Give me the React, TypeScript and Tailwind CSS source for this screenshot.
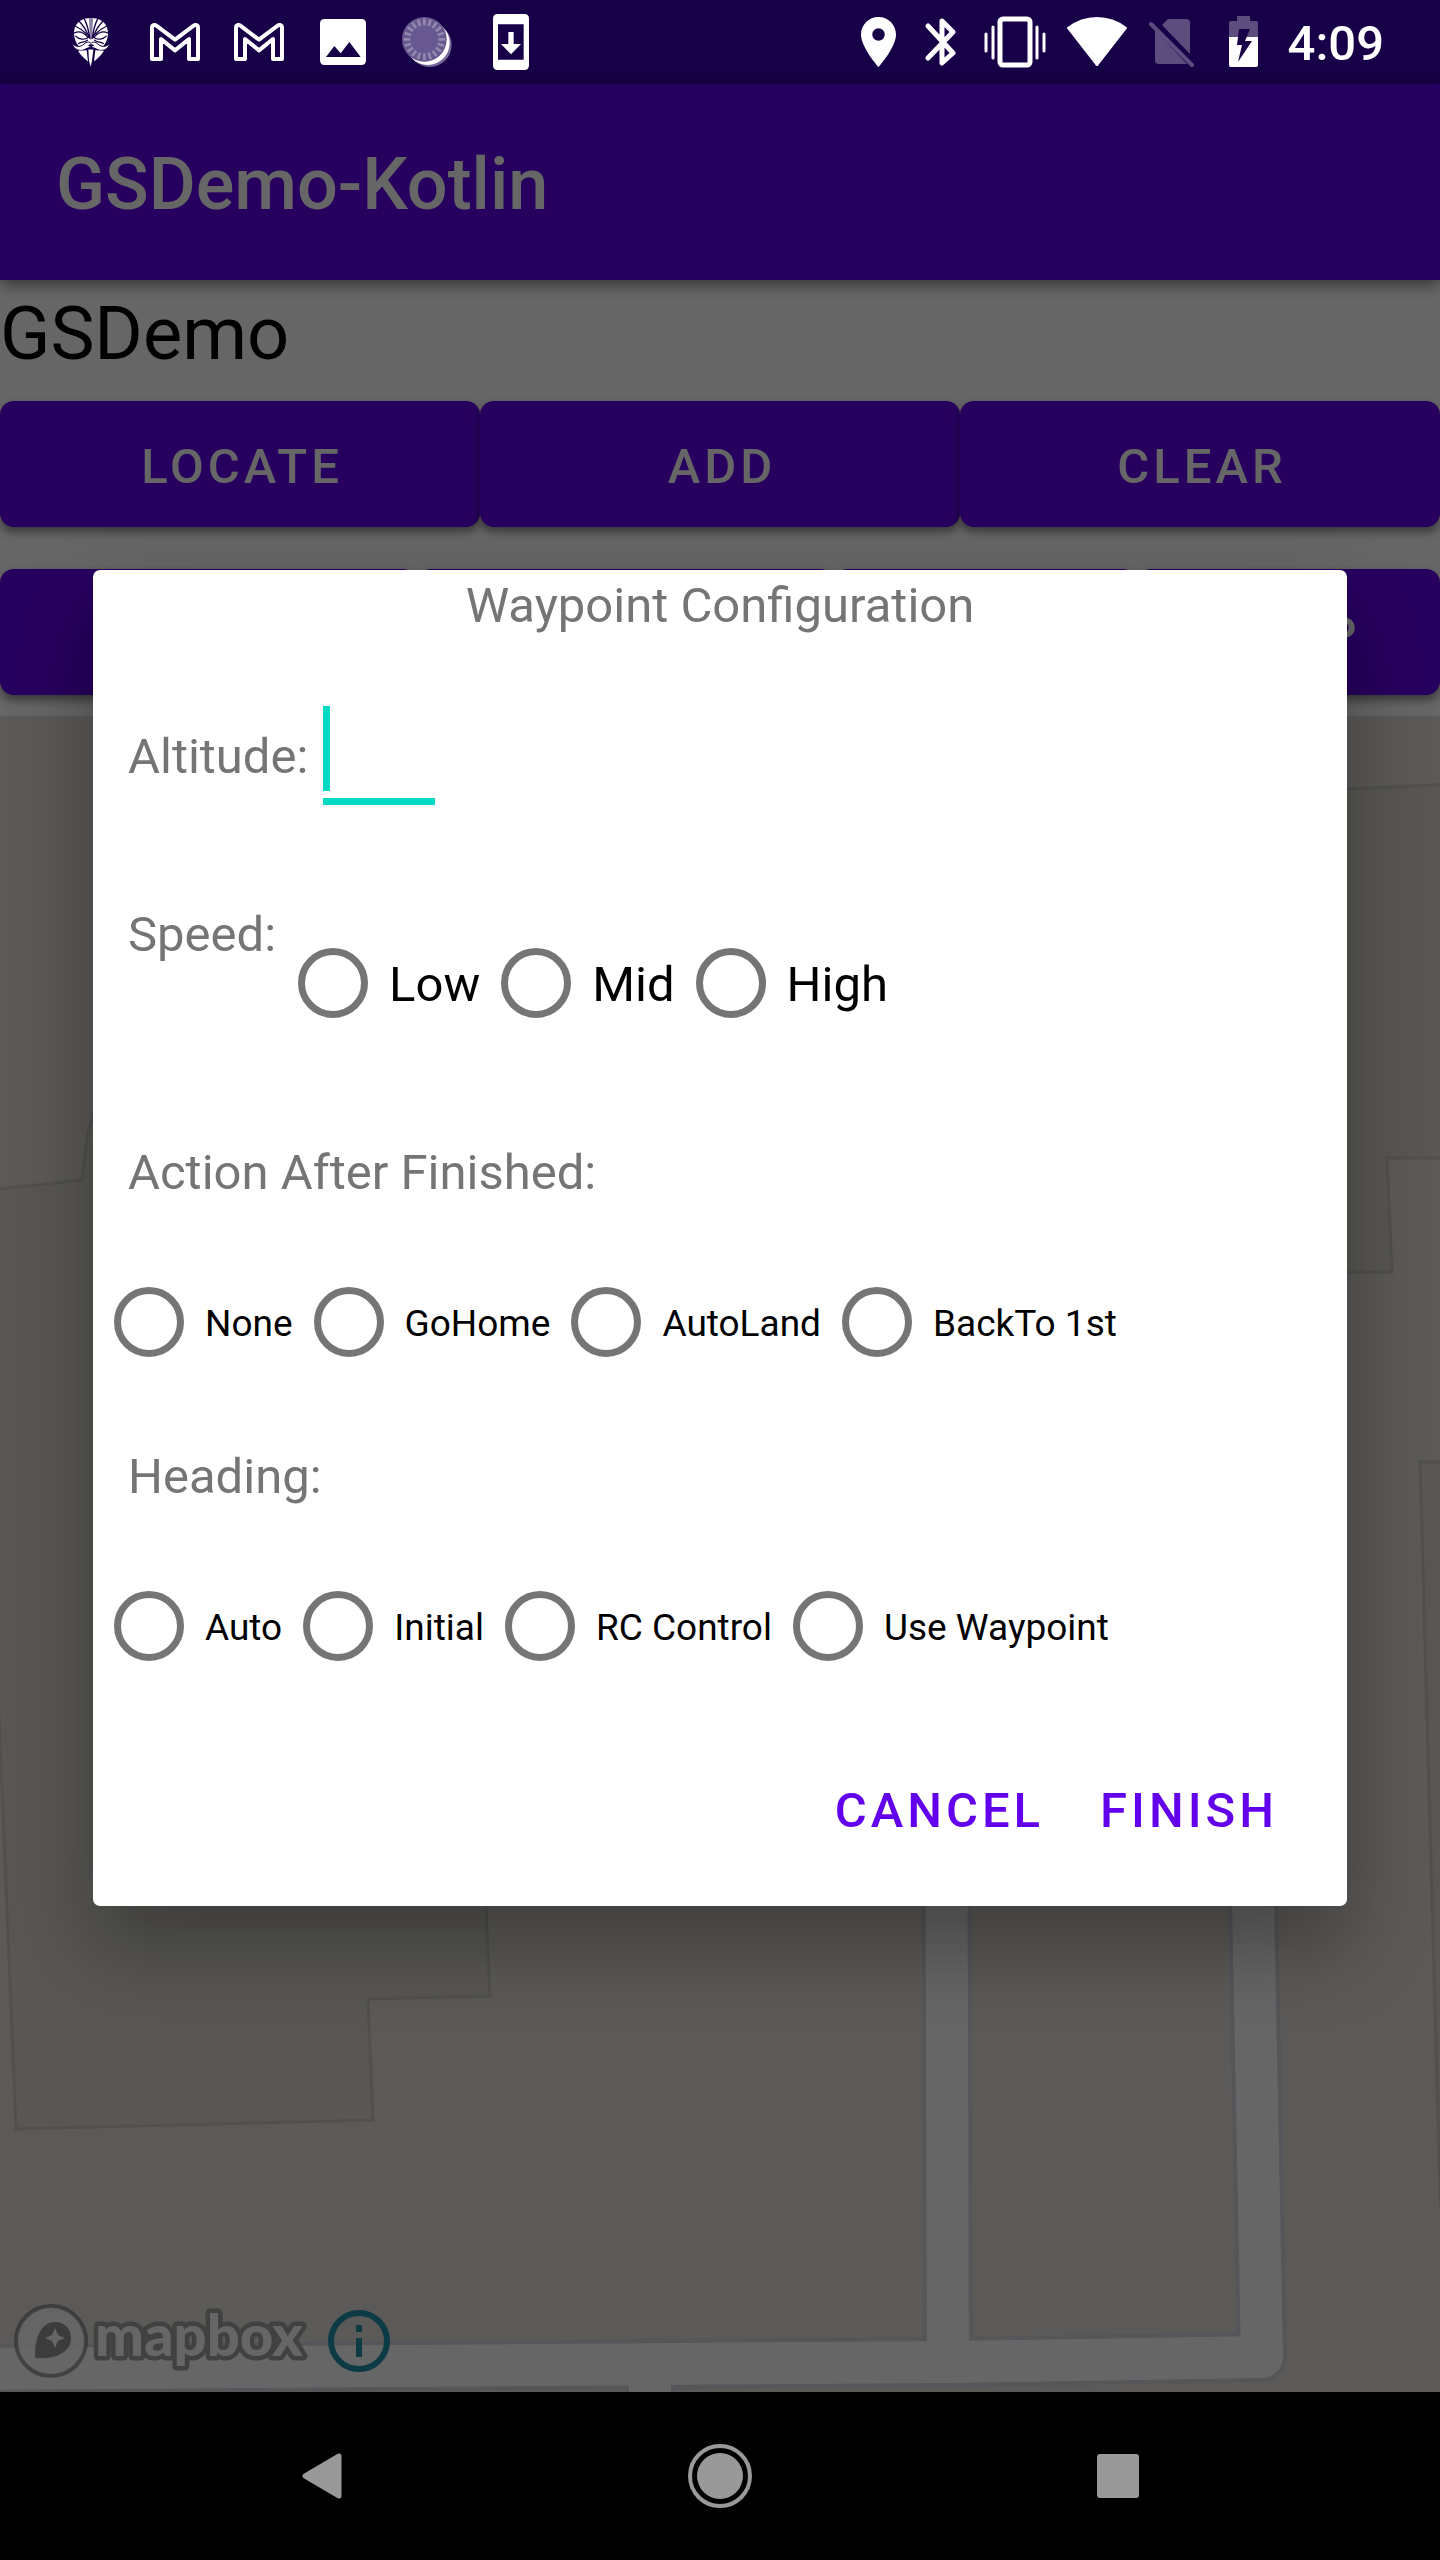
import { useState } from "react";
import type { ReactNode } from "react";

const NOTCH = "#170047";

function MaskIcon() {
  return (
    <svg viewBox="0 0 114 146" className="h-[49px] w-[38px]" aria-hidden="true">
      <path
        d="M57 1C27 -3 5 18 6 48C7 62 12 73 20 84H94C102 73 107 62 108 48C109 18 87 -3 57 1Z"
        fill="#fff"
      />
      <path d="M51 1H63L60 64H54Z" fill="#8b80a3" />
      <g stroke={NOTCH} strokeWidth="4" fill="none" strokeLinecap="round">
        <path d="M37 2C45 18 50 34 53 60M22 10C34 22 43 36 50 56M12 25C24 30 36 40 44 48" />
        <path d="M77 2C69 18 64 34 61 60M92 10C80 22 71 36 64 56M102 25C90 30 78 40 70 48" />
        <path d="M8 44C20 38 36 44 49 58C38 66 20 64 11 54" />
        <path d="M106 44C94 38 78 44 65 58C76 66 94 64 103 54" />
        <path d="M20 76C30 70 36 74 46 66M94 76C84 70 78 74 68 66" />
      </g>
      <path
        d="M0 76C10 86 24 88 36 78C44 70 52 70 57 76C62 70 70 70 78 78C90 88 104 86 114 76C108 96 88 102 72 92C65 87 49 87 42 92C26 102 6 96 0 76Z"
        fill="#fff"
        stroke={NOTCH}
        strokeWidth="3"
      />
      <path d="M48 82C52 77 62 77 66 82L57 88Z" fill={NOTCH} />
      <path d="M18 98L44 96L48 130C38 122 26 112 18 98Z" fill="#fff" />
      <path d="M96 98L70 96L66 130C76 122 88 112 96 98Z" fill="#fff" />
      <path d="M49 94H64L60 128L56 146L51 128Z" fill="#fff" />
    </svg>
  );
}

function MailIcon() {
  return (
    <svg viewBox="0 0 150 114" className="h-[38px] w-[50px]" aria-hidden="true">
      <path
        d="M6 108V14C6 5 14 4 19 8L75 50L131 8C136 4 144 5 144 14V108H117V48L75 82L33 48V108Z"
        fill="none"
        stroke="#fff"
        strokeWidth="12"
        strokeLinejoin="round"
      />
    </svg>
  );
}

function PictureIcon() {
  return (
    <svg viewBox="0 0 138 138" className="size-[46px]" aria-hidden="true">
      <path
        fillRule="evenodd"
        fill="#fff"
        d="M14 0H124Q138 0 138 14V124Q138 138 124 138H14Q0 138 0 124V14Q0 0 14 0ZM18 114H122L88 69L62 103L43 81Z"
      />
    </svg>
  );
}

function SpinnerIcon() {
  const ticks = Array.from({ length: 20 }, (_, i) => i * 18);
  return (
    <svg viewBox="0 0 150 150" className="size-[50px]" aria-hidden="true">
      <circle cx="83" cy="84" r="66" fill="#76689a" />
      <circle cx="77" cy="78" r="66" fill="#fff" />
      <circle cx="67" cy="67" r="67" fill="#675890" />
      {ticks.map((a) => (
        <path key={a} d="M67 5V25" stroke="#9389ac" strokeWidth="8" transform={`rotate(${a} 67 67)`} />
      ))}
    </svg>
  );
}

function UpdateIcon() {
  return (
    <svg viewBox="0 0 108 168" className="h-[56px] w-[36px]" aria-hidden="true">
      <path
        fillRule="evenodd"
        fill="#fff"
        d="M14 0H94Q108 0 108 14V154Q108 168 94 168H14Q0 168 0 154V14Q0 0 14 0ZM15 31V137H92V31Z"
      />
      <path d="M46 54H62V90H84L54 121L24 90H46Z" fill="#fff" />
    </svg>
  );
}

function PinIcon() {
  return (
    <svg viewBox="5 2 14 20" className="h-[50px] w-[35px]" aria-hidden="true">
      <path
        fill="#fff"
        d="M12 2C8.130 2 5 5.130 5 9c0 5.250 7 13 7 13s7-7.750 7-13c0-3.870-3.130-7-7-7zm0 9.500a2.500 2.500 0 1 1 0-5 2.500 2.500 0 0 1 0 5z"
      />
    </svg>
  );
}

function BluetoothIcon() {
  return (
    <svg viewBox="0 0 32 52" className="h-[52px] w-[32px]" aria-hidden="true">
      <path
        d="M3 10L28 37L17 47V5L28 16L3 42"
        fill="none"
        stroke="#fff"
        strokeWidth="5"
        strokeLinecap="round"
        strokeLinejoin="round"
      />
    </svg>
  );
}

function VibrateIcon() {
  return (
    <svg viewBox="0 0 62 52" className="h-[52px] w-[62px]" aria-hidden="true">
      <rect x="16" y="3" width="30" height="46" rx="3" fill="none" stroke="#fff" strokeWidth="5" />
      <path d="M2 18V35M9 11V42M53 11V42M60 18V35" stroke="#fff" strokeWidth="3" strokeLinecap="round" />
    </svg>
  );
}

function WifiIcon() {
  return (
    <svg viewBox="0 0 60 50" className="h-[50px] w-[60px]" aria-hidden="true">
      <path
        d="M1 11Q14 1 30 1Q46 1 59 11L31 47Q30 49 29 47Z"
        fill="#fff"
        stroke="#fff"
        strokeWidth="2"
        strokeLinejoin="round"
      />
    </svg>
  );
}

function NoSimIcon() {
  return (
    <svg viewBox="0 0 46 50" className="h-[50px] w-[46px]" aria-hidden="true">
      <path d="M19 2H37Q41 2 41 6V37L13 8Z" fill="#5d4d7f" />
      <path d="M6 13L38 47H10Q6 47 6 43Z" fill="#5d4d7f" />
      <path d="M2 7L43 48" stroke="#5d4d7f" strokeWidth="4" strokeLinecap="round" />
    </svg>
  );
}

function BatteryIcon() {
  return (
    <svg viewBox="0 0 30 52" className="h-[52px] w-[30px]" aria-hidden="true">
      <path d="M8 0H21V5H27Q29 5 29 7V21H0V7Q0 5 2 5H8Z" fill="#5d4d7f" />
      <path d="M0 21H29V49Q29 51 27 51H2Q0 51 0 49Z" fill="#fff" />
      <path d="M10 13H21L16 25H23L9 46L13 29H8Z" fill={NOTCH} />
    </svg>
  );
}

function StatusBar() {
  return (
    <header className="flex h-[84px] items-center justify-between bg-[#170047] pr-[56px] pl-[49px]">
      <div className="flex items-center">
        {[<MaskIcon />, <MailIcon />, <MailIcon />, <PictureIcon />, <SpinnerIcon />, <UpdateIcon />].map(
          (icon, i) => (
            <span key={i} className="flex w-[84px] justify-center">
              {icon}
            </span>
          ),
        )}
      </div>
      <div className="flex items-center">
        <span className="flex w-[62px] justify-center"><PinIcon /></span>
        <span className="flex w-[62px] justify-center"><BluetoothIcon /></span>
        <span className="flex w-[86px] justify-center"><VibrateIcon /></span>
        <span className="flex w-[78px] justify-center"><WifiIcon /></span>
        <span className="flex w-[72px] justify-center"><NoSimIcon /></span>
        <span className="flex w-[72px] justify-center"><BatteryIcon /></span>
        <time className="pt-1 pl-2 text-[49px] leading-[58px] font-medium text-white">4:09</time>
      </div>
    </header>
  );
}

function AppButton({ children, label }: { children?: ReactNode; label?: string }) {
  return (
    <button
      type="button"
      aria-label={label}
      className="h-[126px] min-w-0 rounded-[14px] bg-[#6200ee] pt-1.5 pl-1 text-center text-[49px] leading-[58px] font-medium tracking-[4px] text-white shadow-[0_5px_10px_rgba(0,0,0,0.45)]"
    >
      {children}
    </button>
  );
}

function MapView() {
  const streets = "M946 1700L948 2362M1249 1700L1262 2357L948 2362L-20 2369M650 2365V2440";
  return (
    <section aria-label="Map" className="relative min-h-0 flex-1 overflow-hidden bg-[#e6e2dc]">
      <svg
        viewBox="0 716 1440 1676"
        preserveAspectRatio="xMidYMax slice"
        className="absolute inset-0 size-full"
        aria-hidden="true"
      >
        <g fill="#ddd9d2" stroke="#cbc7c1" strokeWidth="3">
          <path d="M-10 1190L82 1180L88 1133L100 1090L460 1090L486 1906L490 1996L368 1999L373 2120L16 2129L0 1740L-10 1500Z" />
          <path d="M1300 791L1460 784V1158H1387L1392 1272H1300Z" />
          <path d="M1460 1462H1420L1440 2191L1460 2500Z" />
        </g>
        <g fill="none" strokeLinejoin="round">
          <path d={streets} stroke="#d4d4e0" strokeWidth="50" />
          <path d={streets} stroke="#fff" strokeWidth="42" />
        </g>
      </svg>
      <div className="absolute bottom-[11px] left-3 flex items-center gap-[14px]">
        <svg viewBox="0 0 302 80" className="h-[80px] w-[302px]" role="img" aria-label="mapbox">
          <circle cx="39" cy="40" r="35" fill="#fff" fillOpacity="0.9" stroke="#000" strokeOpacity="0.35" strokeWidth="4" />
          <path d="M23 57C22 36 30 21 43 21C53 21 59 28 59 37C59 52 42 59 23 57Z" fill="#000" fillOpacity="0.4" />
          <path d="M43 27L46 34L53 37L46 40L43 47L40 40L33 37L40 34Z" fill="#fff" />
          <text
            x="83"
            y="55"
            fill="#fff"
            stroke="#a4a2a0"
            strokeWidth="9"
            strokeLinejoin="round"
            paintOrder="stroke"
            className="font-['Lato',sans-serif] text-[58px] font-black"
          >
            mapbox
          </text>
        </svg>
        <button type="button" aria-label="Map information">
          <svg viewBox="0 0 62 62" className="size-[62px]" aria-hidden="true">
            <circle cx="31" cy="31" r="28" fill="none" stroke="#1e91ac" strokeWidth="6" />
            <path d="M28 15H34V22H28ZM28 28H34V47H28Z" fill="#1e91ac" />
          </svg>
        </button>
      </div>
    </section>
  );
}

function RadioRow({
  name,
  label,
  options,
  small = false,
}: {
  name: string;
  label: string;
  options: string[];
  small?: boolean;
}) {
  const [value, setValue] = useState("");
  return (
    <div role="radiogroup" aria-label={label} className="flex">
      {options.map((o) => (
        <label key={o} className="flex h-[112px] items-center text-black">
          <input
            type="radio"
            name={name}
            value={o}
            checked={value === o}
            onChange={() => setValue(o)}
            className="m-[21px] size-[70px] shrink-0 appearance-none rounded-full border-[7px] border-[#757575] checked:border-[#03dac5]"
          />
          <span className={small ? "pt-1 text-[37px] leading-[44px] whitespace-nowrap" : "pt-1 text-[49px] leading-[58px] whitespace-nowrap"}>
            {o}
          </span>
        </label>
      ))}
    </div>
  );
}

function TextButton({ children }: { children: ReactNode }) {
  return (
    <button type="button" className="h-[126px] px-7 text-[49px] leading-[58px] font-medium tracking-[4px] text-[#6200ee]">
      {children}
    </button>
  );
}

function WaypointDialog() {
  return (
    <form
      role="dialog"
      aria-labelledby="dialog-title"
      className="flex w-full flex-col rounded-[7px] bg-white pb-8 text-[49px] leading-[58px] text-[#757575] shadow-[0_40px_84px_rgba(0,0,0,0.32)]"
    >
      <h2 id="dialog-title" className="pt-[7px] text-center">
        Waypoint Configuration
      </h2>
      <div className="mt-[71px] flex px-[35px]">
        <label htmlFor="altitude" className="pt-[22px]">
          Altitude:
        </label>
        <div className="ml-[15px] flex h-[99px] w-[112px] border-b-[7px] border-[#03dac5]">
          <span className="h-[85px] w-[7px] shrink-0 bg-[#03dac5]" />
          <input id="altitude" type="text" inputMode="decimal" className="h-[85px] w-full min-w-0 text-black outline-none" />
        </div>
      </div>
      <div className="mt-[101px] flex gap-px pl-[35px]">
        <span>Speed:</span>
        <div className="pt-[21px]">
          <RadioRow name="speed" label="Speed" options={["Low", "Mid", "High"]} />
        </div>
      </div>
      <h3 className="mt-[105px] mb-[64px] px-[35px]">Action After Finished:</h3>
      <RadioRow small name="action" label="Action After Finished" options={["None", "GoHome", "AutoLand", "BackTo 1st"]} />
      <h3 className="mt-[70px] mb-[64px] px-[35px]">Heading:</h3>
      <RadioRow small name="heading" label="Heading" options={["Auto", "Initial", "RC Control", "Use Waypoint"]} />
      <div className="mt-[66px] flex justify-end pr-[41px]">
        <TextButton>CANCEL</TextButton>
        <TextButton>FINISH</TextButton>
      </div>
    </form>
  );
}

function NavBar() {
  return (
    <nav className="flex h-[168px] justify-center bg-black">
      <div className="grid w-[83%] grid-cols-3 place-items-center">
        <button type="button" aria-label="Back">
          <svg viewBox="0 0 40 46" className="h-[46px] w-[40px]" aria-hidden="true">
            <path d="M3 23L37 3V43Z" fill="#999" stroke="#999" strokeWidth="5" strokeLinejoin="round" />
          </svg>
        </button>
        <button type="button" aria-label="Home">
          <svg viewBox="0 0 64 64" className="size-[64px]" aria-hidden="true">
            <circle cx="32" cy="32" r="30" fill="none" stroke="#999" strokeWidth="4" />
            <circle cx="32" cy="32" r="23" fill="#999" />
          </svg>
        </button>
        <button type="button" aria-label="Recent apps">
          <svg viewBox="0 0 42 44" className="h-[44px] w-[42px]" aria-hidden="true">
            <rect width="42" height="44" rx="3" fill="#999" />
          </svg>
        </button>
      </div>
    </nav>
  );
}

export default function App() {
  return (
    <div className="flex min-h-screen flex-col bg-black font-['Roboto',sans-serif]">
      <StatusBar />
      <main className="relative flex flex-1 flex-col bg-white">
        <div className="z-0 flex h-[196px] items-center bg-[#6200ee] px-14 pt-1.5 shadow-[0_4px_14px_rgba(0,0,0,0.5)]">
          <h1 className="text-[72px] leading-[82px] font-medium text-white">GSDemo-Kotlin</h1>
        </div>
        <p className="pt-[5px] text-[74px] leading-[98px] text-black">GSDemo</p>
        <div className="mt-[18px] grid grid-cols-3">
          <AppButton>LOCATE</AppButton>
          <AppButton>ADD</AppButton>
          <AppButton>CLEAR</AppButton>
        </div>
        <div className="mt-[42px] mb-[21px] grid grid-cols-[417fr_417fr_303fr_303fr]">
          <AppButton label="Config" />
          <AppButton label="Upload" />
          <AppButton label="Start" />
          <AppButton>STOP</AppButton>
        </div>
        <MapView />
        <div className="absolute inset-0 z-10 flex items-center bg-black/60 px-[93px]">
          <WaypointDialog />
        </div>
      </main>
      <NavBar />
    </div>
  );
}
